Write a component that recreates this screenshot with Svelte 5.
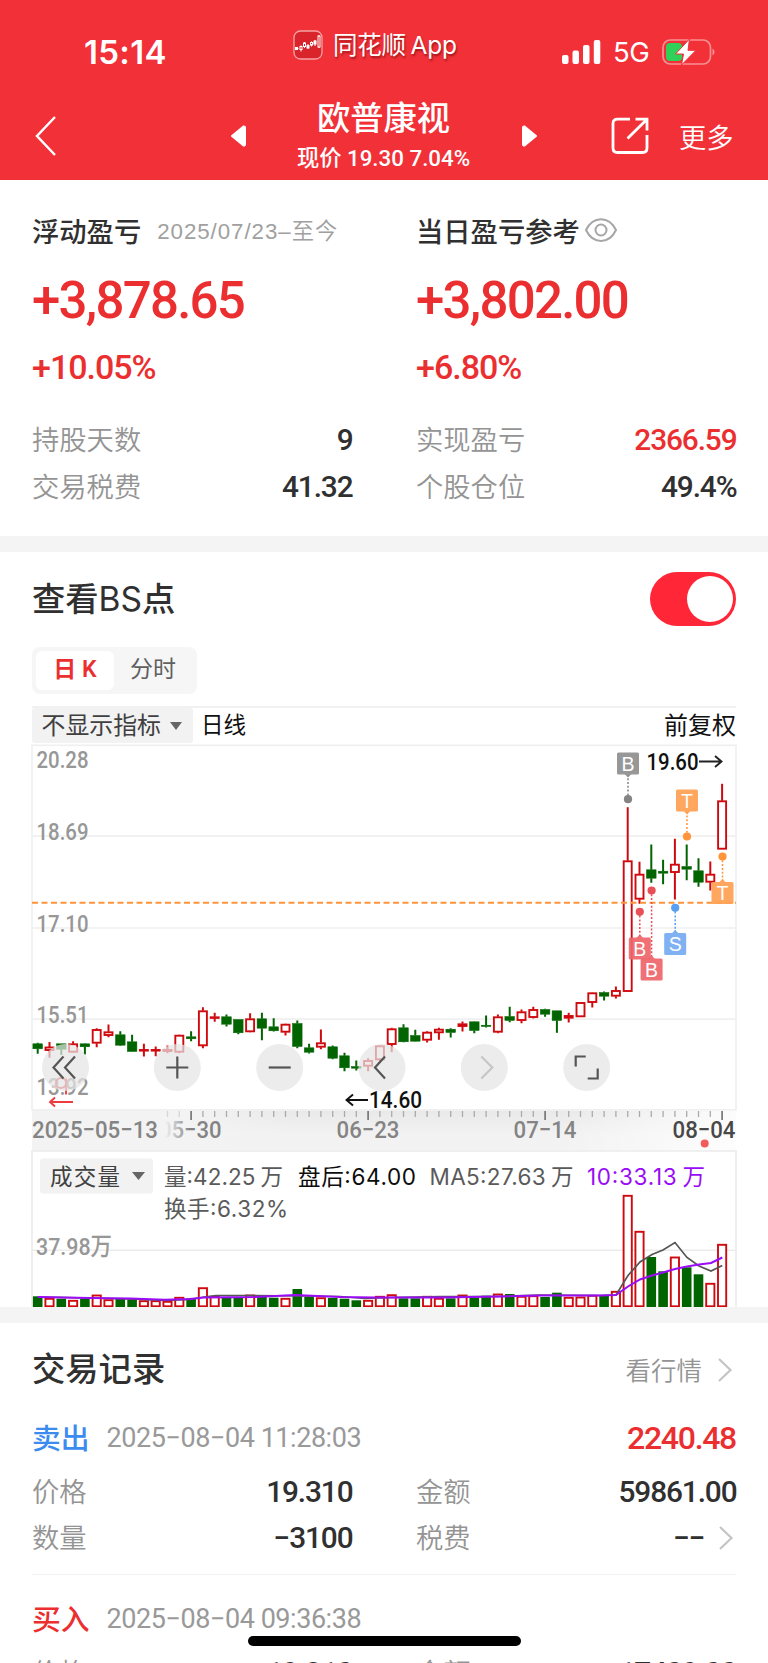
<script>
  // chart geometry: one candle every 11.8px
  const FIRST_X = 37.7
  const STEP = 11.8
  const BODY = 9.6
  const BASE = 1306.5

  // [up, high, body top, body bottom, low, volume bar height]
  const candles = [
    [0, 1042.3, 1043.3, 1048.3, 1053.3, 10.7],
    [1, 1041.5, 1046.5, 1050, 1057.3, 8.7],
    [0, 1043.3, 1043.3, 1048.7, 1054.3, 8.3],
    [1, 1040.7, 1043.3, 1051.7, 1052, 6.7],
    [0, 1043, 1043.3, 1046.3, 1054, 8],
    [1, 1027.7, 1029, 1042.7, 1046.7, 12],
    [1, 1024, 1031.3, 1035, 1036.7, 7.3],
    [0, 1030.7, 1034.3, 1044.7, 1045.3, 8],
    [0, 1034.3, 1041.3, 1051, 1051.3, 7.7],
    [1, 1043.3, 1049, 1050, 1056, 6.3],
    [1, 1046, 1049, 1050, 1055.7, 6.3],
    [1, 1045, 1049, 1051, 1052.7, 5.7],
    [1, 1034.3, 1034.7, 1051.7, 1052.7, 9.7],
    [0, 1030.7, 1036.3, 1038.3, 1040.7, 8.7],
    [1, 1006.7, 1010.3, 1045.3, 1047.7, 19.3],
    [1, 1012.3, 1016.3, 1017.7, 1021.3, 10.7],
    [0, 1014, 1016.3, 1023.7, 1026, 10],
    [0, 1019, 1019, 1032.3, 1033.7, 10],
    [1, 1012.7, 1018.3, 1031.3, 1031.7, 12],
    [0, 1012.3, 1018.3, 1027.7, 1039.7, 11.3],
    [0, 1017.7, 1026.3, 1030.3, 1031, 9.3],
    [1, 1023.3, 1023.7, 1031.7, 1035, 8.7],
    [0, 1020, 1023, 1046, 1047.7, 18],
    [0, 1043.3, 1047.3, 1051.7, 1053, 10],
    [1, 1029, 1042.3, 1046.7, 1048.7, 9.3],
    [0, 1045, 1046.3, 1057.7, 1058.7, 9],
    [0, 1052.3, 1055.3, 1067.3, 1070.7, 8.3],
    [0, 1060, 1066, 1067.7, 1070, 6.7],
    [1, 1057.7, 1060, 1065.7, 1070.7, 6.7],
    [1, 1045, 1045.3, 1059.3, 1062, 10.7],
    [1, 1027.3, 1028.3, 1044, 1051.7, 12.3],
    [0, 1023.7, 1027.3, 1041.3, 1041.7, 8.7],
    [0, 1029.3, 1035, 1040.7, 1041, 8.7],
    [1, 1030.7, 1031.7, 1039.7, 1042, 10.7],
    [1, 1027.3, 1028.7, 1032.3, 1039.3, 8.7],
    [0, 1027.7, 1028.7, 1032, 1037, 8.7],
    [1, 1021, 1023.3, 1026, 1031, 12],
    [0, 1021, 1021.3, 1030, 1032.7, 9.7],
    [0, 1015, 1024.7, 1026, 1027, 11.3],
    [1, 1014, 1016.3, 1031.7, 1032.7, 13],
    [0, 1006.3, 1016, 1020, 1021.7, 13],
    [1, 1009, 1011.3, 1020, 1022.7, 10.7],
    [1, 1006.3, 1009, 1017, 1018, 11.3],
    [0, 1008.3, 1009, 1013.7, 1016.3, 10],
    [0, 1010.3, 1010.3, 1020, 1032.3, 14.3],
    [1, 1012.3, 1015, 1017.7, 1022, 9.7],
    [1, 1001.7, 1002, 1016.3, 1016.5, 10],
    [1, 992, 992.3, 1002, 1007, 11.7],
    [0, 991, 992, 995.7, 1000, 11],
    [1, 986, 990, 995.7, 998, 15.7],
    [1, 806.7, 860.3, 991, 991, 111.7],
    [1, 861.3, 873.7, 898.7, 903.3, 75.7],
    [0, 844, 869.3, 877.7, 882.3, 50],
    [0, 859.3, 870.7, 872.7, 883.7, 35.7],
    [1, 838.3, 863.7, 872, 899, 50],
    [0, 844, 866, 868.7, 879.7, 39.7],
    [0, 857.7, 870.3, 881.7, 886.3, 32.7],
    [1, 861, 873.7, 881.7, 890, 23.7],
    [1, 783.3, 800.3, 848.7, 848.7, 62.7],
  ].map(([up, high, top, bottom, low, vol], i) => ({
    x: FIRST_X + i * STEP,
    up, high, top, bottom, low, vol,
  }))

  const priceLabels = [
    ['20.28', 767.5],
    ['18.69', 839.5],
    ['17.10', 931],
    ['15.51', 1022],
    ['13.92', 1094],
  ]

  // buy / sell / T marks. dir: 1 = box above its dot, -1 = box below
  const marks = [
    { t: 'B', x: 628, box: 752, dot: 798.7, dir: 1, fill: '#8f8f8f', ink: '#848484' },
    { t: 'B', x: 639.8, box: 937, dot: 911.3, dir: -1, fill: '#ee666b', ink: '#e94f57' },
    { t: 'B', x: 651.6, box: 958, dot: 890, dir: -1, fill: '#ee666b', ink: '#e94f57' },
    { t: 'S', x: 675.2, box: 932.5, dot: 907.3, dir: -1, fill: '#75abf2', ink: '#5a9ff0' },
    { t: 'T', x: 687, box: 789, dot: 836, dir: 1, fill: '#ffa052', ink: '#ff943a' },
    { t: 'T', x: 722.5, box: 881.5, dot: 856, dir: -1, fill: '#ffa052', ink: '#ff943a' },
  ]

  const ma5 = '37.7,1296.5 90,1297.5 130,1298.5 165,1300 190,1299 204,1296.5 216,1295 255,1295 300,1295.5 340,1296 365,1298 392,1297 440,1296 500,1296 540,1294.5 600,1295 616,1294.5 628,1275 640,1261.5 652,1254 663,1249.5 675,1242 687,1257 699,1265.5 711,1270.5 722.3,1265'
  const ma10 = '37.7,1296.5 90,1297.5 130,1298 165,1299.3 190,1298.5 204,1297 255,1296.5 295,1294.5 340,1296.5 375,1297 440,1297 500,1296 540,1295 600,1295 616,1294.5 628,1286 640,1279 652,1275 663,1272 675,1268.5 687,1266 699,1264 711,1262.5 722.3,1257'

  const ticks = candles.slice(11).map((c, i) => ({ x: c.x, major: [13, 28, 43, 58].includes(i + 11), faint: i < 2 }))

  const controls = [
    { x: 65.5, d: 'M-2 -11 L-12 0 L-2 11 M9.500 -11 L-0.500 0 L9.500 11' },
    { x: 177.3, d: 'M-11 0 H11 M0 -11 V11' },
    { x: 279.7, d: 'M-11 0 H11' },
    { x: 382, d: 'M3 -11 L-7 0 L3 11' },
    { x: 484.3, d: 'M-3 -11 L8 0 L-3 11', off: true },
    { x: 586.7, d: 'M-11 -1 V-11 H-1 M11 1 V11 H1' },
  ]

  const summary = [
    {
      title: '浮动盈亏', range: '2025/07/23–至今', amount: '+3,878.65', pct: '+10.05%',
      rows: [['持股天数', '9'], ['交易税费', '41.32']],
    },
    {
      title: '当日盈亏参考', eye: true, amount: '+3,802.00', pct: '+6.80%',
      rows: [['实现盈亏', '2366.59', true], ['个股仓位', '49.4%']],
    },
  ]

  const records = [
    {
      side: '卖出', sell: true, time: '2025−08−04 11:28:03', profit: '2240.48',
      cells: [['价格', '19.310'], ['金额', '59861.00'], ['数量', '−3100'], ['税费', '−−', true]],
    },
    {
      side: '买入', time: '2025−08−04 09:36:38', profit: '',
      cells: [['价格', '19.310'], ['金额', '17409.00']],
    },
  ]

  let showBS = true
</script>

<div class="screen">
  <header>
    <div class="status">
      <span class="clock">15:14</span>
      <div class="source">
        <svg width="30" height="30" viewBox="0 0 30 30">
          <rect x="1" y="1" width="28" height="28" rx="6.500" fill="#d9242b" stroke="#f5a3a5" stroke-width="1.300" />
          <path d="M3 18.500h2.500M8 15.500v6M11.500 12v6M15 14v5M18.500 11.500v5M22 10v6M26 5v13" stroke="#fff" stroke-width="1" />
          <g fill="#d9242b" stroke="#fff" stroke-width="1">
            <rect x="2.500" y="17.500" width="2" height="2" fill="#fff" /><rect x="7" y="16.500" width="2" height="3" />
            <rect x="10.500" y="13" width="2" height="3.500" /><rect x="14" y="15.500" width="2" height="2.500" fill="#fff" />
            <rect x="17.500" y="12.500" width="2" height="2.500" /><rect x="21" y="11" width="2" height="3" fill="#fff" />
            <rect x="25" y="6" width="2" height="11" />
          </g>
        </svg>
        <span>同花顺 App</span>
      </div>
      <div class="signal">
        <svg width="39" height="24" viewBox="0 0 39 24" fill="#fff">
          <rect y="15" width="6.500" height="9" rx="2" /><rect x="10.500" y="10.500" width="6.500" height="13.500" rx="2" />
          <rect x="21" y="5" width="6.500" height="19" rx="2" /><rect x="31.800" width="6.500" height="24" rx="2" />
        </svg>
        <span>5G</span>
        <svg width="54" height="28" viewBox="0 0 54 28">
          <rect x="1" y="2" width="47.500" height="24" rx="7.500" fill="none" stroke="#f78f93" stroke-width="1.700" />
          <path d="M50.500 10.500a4 4 0 0 1 0 7z" fill="#f78f93" />
          <rect x="4" y="5" width="16" height="18" rx="4" fill="#30d158" />
          <path d="M27.500 1 L13.500 16 H21.500 L19.500 27 L34 12.300 H26 Z" fill="#fff" stroke="#f23038" stroke-width="1" />
        </svg>
      </div>
    </div>
    <nav>
      <svg class="back" width="24" height="42" viewBox="0 0 24 42"><path d="M22 2 L4 21 L22 40" fill="none" stroke="#fff" stroke-width="2.500" /></svg>
      <svg class="prev" width="17" height="24" viewBox="0 0 17 24"><path d="M2 12 L13.500 2.500 Q15 2 15 4 V20 Q15 22 13.500 21.500 Z" fill="#fff" stroke="#fff" stroke-width="2" stroke-linejoin="round" /></svg>
      <div class="stock">
        <strong>欧普康视</strong>
        <span>现价 19.30 7.04%</span>
      </div>
      <svg class="next" width="17" height="24" viewBox="0 0 17 24"><path d="M15 12 L3.500 2.500 Q2 2 2 4 V20 Q2 22 3.500 21.500 Z" fill="#fff" stroke="#fff" stroke-width="2" stroke-linejoin="round" /></svg>
      <svg class="share" width="38" height="38" viewBox="0 0 38 38" fill="none" stroke="#fff" stroke-width="2.800">
        <path d="M19 2.200 H6.500 Q2 2.200 2 6.500 V31 Q2 35.500 6.500 35.500 H31.500 Q36 35.500 36 31 V18" />
        <path d="M24.500 2.200 H36 V13.500 M36 2.200 L16.500 21.500" />
      </svg>
      <span class="more">更多</span>
    </nav>
  </header>

  <section class="summary">
    {#each summary as s}
      <div class="col">
        <div class="col-title">
          <b>{s.title}</b>
          {#if s.range}<span>{s.range}</span>{/if}
          {#if s.eye}
            <svg width="34" height="26" viewBox="0 0 34 26" fill="none" stroke="#a6a6a6" stroke-width="2">
              <path d="M2 13 C9 -1.500 25 -1.500 32 13 C25 27.500 9 27.500 2 13 Z" /><circle cx="17" cy="13" r="5.500" />
            </svg>
          {/if}
        </div>
        <div class="amount">{s.amount}</div>
        <div class="pct">{s.pct}</div>
        {#each s.rows as [label, value, red]}
          <div class="row"><span>{label}</span><b class:red>{value}</b></div>
        {/each}
      </div>
    {/each}
  </section>

  <section class="chart">
    <div class="bs-row">
      <h2>查看<em>BS</em>点</h2>
      <button class="toggle" class:on={showBS} aria-label="查看BS点" on:click={() => (showBS = !showBS)}><i></i></button>
    </div>
    <div class="tabs"><span class="active">日 K</span><span>分时</span></div>
    <div class="toolbar">
      <span class="select"><span>不显示指标</span><i></i></span>
      <span class="period">日线</span>
      <span class="adjust">前复权</span>
    </div>

    <svg class="plot" width="706" height="563.500" viewBox="31 743.500 706 563.500">
      <defs>
        <linearGradient id="axis" x1="0" y1="0" x2="0" y2="1">
          <stop offset="0" stop-color="#e9e9e9" /><stop offset="0.600" stop-color="#f2f2f2" /><stop offset="1" stop-color="#f3f3f3" />
        </linearGradient>
        <linearGradient id="axis-left" x1="0" x2="1">
          <stop offset="0.600" stop-color="#f3f3f3" /><stop offset="1" stop-color="#f3f3f3" stop-opacity="0" />
        </linearGradient>
        <linearGradient id="axis-right" x1="0" x2="1">
          <stop offset="0" stop-color="#fff" stop-opacity="0" /><stop offset="1" stop-color="#fff" stop-opacity="0.850" />
        </linearGradient>
        <linearGradient id="date-fade" x1="0" x2="1">
          <stop offset="0.840" stop-color="#f3f3f3" /><stop offset="1" stop-color="#f3f3f3" stop-opacity="0" />
        </linearGradient>
      </defs>

      <!-- k-line -->
      <g stroke="#f0f0f0" stroke-width="1.700" fill="none">
        <rect x="32" y="744.800" width="704" height="364.500" />
        <path d="M32 835.700H736M32 927.500H736M32 1018.700H736" />
      </g>
      <g class="num grey">
        {#each priceLabels as [text, y]}
          <text x="36.500" {y} textLength="52" lengthAdjust="spacingAndGlyphs">{text}</text>
        {/each}
      </g>
      {#each candles as c}
        {@const color = c.up ? '#cf0a0f' : '#006400'}
        <path d="M{c.x} {c.high}V{c.top}M{c.x} {c.bottom}V{c.low}" stroke={color} stroke-width="2" />
        <rect
          x={c.x - BODY / 2 + (c.up ? 0.8 : 0)} y={c.top + (c.up ? 0.5 : 0)}
          width={BODY - (c.up ? 1.6 : 0)} height={Math.max(c.bottom - c.top - (c.up ? 1 : 0), 0.6)}
          fill={c.up ? '#fff' : color} stroke={color} stroke-width={c.up ? 1.9 : 0.5} />
      {/each}
      <path d="M32 902.300H736" stroke="#ff943a" stroke-width="2" stroke-dasharray="6 3.500" />

      {#if showBS}
        {#each marks as m}
          <path
            d="M{m.x} {m.dot}V{m.dir > 0 ? m.box + 22 : m.box}"
            stroke={m.ink} stroke-width="1.500" stroke-dasharray="2 1.800" />
          <circle cx={m.x} cy={m.dot} r="4.100" fill={m.ink} />
          <g opacity="0.920">
            <path
              d={m.dir > 0 ? `M${m.x - 4} ${m.box + 21}h8l-4 4z` : `M${m.x - 4} ${m.box + 1}h8l-4 -4z`}
              fill={m.fill} />
            <rect x={m.x - 11} y={m.box} width="22" height="22" rx="1.500" fill={m.fill} />
            <text class="mark" x={m.x} y={m.box + 18} text-anchor="middle">{m.t}</text>
          </g>
        {/each}
      {/if}
      <text class="num" x="646.500" y="769.500" textLength="52" lengthAdjust="spacingAndGlyphs">19.60</text>
      <path d="M699 761H721M715 755.500L721.500 761L715 766.500" fill="none" stroke="#222" stroke-width="1.900" />
      <text class="num" x="369" y="1107.500" textLength="53" lengthAdjust="spacingAndGlyphs">14.60</text>
      <path d="M368 1099.500H347M353 1094L346.500 1099.500L353 1105" fill="none" stroke="#111" stroke-width="1.900" />
      <g fill="none" stroke="#ef3b3f" stroke-width="1.900">
        <circle cx="61" cy="1082.500" r="5" /><path d="M66 1078V1094" />
        <path d="M73 1101.500H50M55 1097L50 1101.500L55 1106" />
      </g>

      <!-- chart controls -->
      {#each controls as c}
        <g transform="translate({c.x} 1067)">
          <circle r="23.500" fill="rgb(228,228,228)" fill-opacity="0.720" />
          <path d={c.d} fill="none" stroke={c.off ? '#c6c6c6' : '#555'} stroke-width="2.200" />
        </g>
      {/each}

      <!-- date axis -->
      <rect x="32" y="1110" width="704" height="40" fill="url(#axis)" />
      <rect x="32" y="1110" width="260" height="40" fill="url(#axis-left)" />
      <rect x="560" y="1110" width="176" height="40" fill="url(#axis-right)" />
      {#each ticks as t}
        <path d="M{t.x} 1110.500v{t.major ? 9 : 6}" stroke={t.major ? '#777' : '#aaa'} stroke-width={t.major ? 1.7 : 1.3} opacity={t.faint ? 0.4 : 1} />
      {/each}
      <g class="num date">
        <text x="159" y="1137" textLength="62.500" lengthAdjust="spacingAndGlyphs">05−30</text>
        <rect x="32" y="1120" width="158" height="22" fill="url(#date-fade)" />
        <text x="32" y="1137" textLength="126" lengthAdjust="spacingAndGlyphs">2025−05−13</text>
        <text x="336.500" y="1137" textLength="63" lengthAdjust="spacingAndGlyphs">06−23</text>
        <text x="513.500" y="1137" textLength="63" lengthAdjust="spacingAndGlyphs">07−14</text>
        <text class="last" x="672.500" y="1137" textLength="63" lengthAdjust="spacingAndGlyphs">08−04</text>
      </g>
      <circle cx="704.700" cy="1143" r="4" fill="#f25a5d" />

      <!-- volume -->
      <path d="M32 1307V1150.500H736V1307M32 1249.800H736" fill="none" stroke="#ececec" stroke-width="1.600" />
      <rect x="40" y="1158" width="113" height="35" rx="3" fill="#f2f2f2" />
      <text class="cn dark" x="50" y="1184.500" textLength="70">成交量</text>
      <path d="M132 1171.500h13l-6.500 8z" fill="#666" />
      <text class="cn" x="164" y="1184.500" textLength="119">量:42.25<tspan dx="5">万</tspan></text>
      <text class="cn black" x="298" y="1184.500" textLength="118">盘后:64.00</text>
      <text class="cn" x="429.500" y="1184.500" textLength="144">MA5:27.63<tspan dx="5">万</tspan></text>
      <text class="cn purple" x="587" y="1184.500" textLength="118">10:33.13<tspan dx="5">万</tspan></text>
      <text class="cn" x="164" y="1216" textLength="124">换手:6.32%</text>
      <text class="num grey" x="36" y="1254" textLength="76" lengthAdjust="spacingAndGlyphs">37.98万</text>
      {#each candles as c}
        <rect
          x={c.x - BODY / 2 + (c.up ? 0.7 : 0)} y={BASE - c.vol + (c.up ? 0.5 : 0)}
          width={BODY - (c.up ? 1.4 : 0)} height={c.vol - (c.up ? 1.2 : 0)}
          fill={c.up ? '#fff' : '#006400'} stroke={c.up ? '#cf0a0f' : 'none'} stroke-width="1.900" />
      {/each}
      <polyline points={ma5} fill="none" stroke="#555" stroke-width="1.700" />
      <polyline points={ma10} fill="none" stroke="#9a0cf5" stroke-width="2" />
    </svg>
  </section>

  <section class="trades">
    <div class="trades-head">
      <h2>交易记录</h2>
      <span>看行情</span>
      <svg width="16" height="26" viewBox="0 0 16 26"><path d="M2 2 L13.500 13 L2 24" fill="none" stroke="#c4c4c4" stroke-width="2.200" /></svg>
    </div>
    {#each records as r}
      <article>
        <div class="record-head">
          <b class:sell={r.sell}>{r.side}</b>
          <time>{r.time}</time>
          <strong>{r.profit}</strong>
        </div>
        <div class="cells">
          {#each r.cells as [label, value, more]}
            <div class="row">
              <span>{label}</span><b>{value}</b>
              {#if more}
                <svg width="16" height="26" viewBox="0 0 16 26"><path d="M2 2 L13.500 13 L2 24" fill="none" stroke="#c4c4c4" stroke-width="2.200" /></svg>
              {/if}
            </div>
          {/each}
        </div>
      </article>
    {/each}
  </section>

  <div class="home-bar"></div>
</div>

<style>
  :global(body) {
    margin: 0;
    background: #fff;
  }

  .screen {
    position: relative;
    width: 768px;
    height: 1663px;
    overflow: hidden;
    background: #fff;
    color: #303030;
    font-family: Roboto, 'Noto Sans CJK SC', sans-serif;
  }

  h2 {
    margin: 0;
    font-size: 33.3px;
    font-weight: 500;
    line-height: 1;
  }

  h2 em {
    font-family: Inter, sans-serif;
    font-size: 33.5px;
    font-style: normal;
    font-weight: 400;
  }

  svg {
    flex-shrink: 0;
  }

  /* header */
  header {
    height: 179.5px;
    background: #f23038;
    color: #fff;
  }

  .status {
    display: grid;
    grid-template-columns: 293px 1fr 206px;
    height: 92px;
    box-sizing: border-box;
    padding-top: 24px;
    font-family: Inter, 'Noto Sans CJK SC', sans-serif;
  }

  .clock {
    padding-left: 84px;
    font-size: 33px;
    font-weight: 600;
    line-height: 56px;
    letter-spacing: 0.3px;
  }

  .source {
    display: flex;
    align-items: center;
    gap: 10px;
    height: 41px;
    font-size: 24.5px;
    letter-spacing: -0.2px;
    word-spacing: -2px;
    white-space: nowrap;
    text-shadow: 1px 2px 2px rgba(80, 0, 0, 0.5);
  }

  .source span {
    padding-bottom: 3px;
  }

  .signal {
    display: flex;
    align-items: center;
    height: 56px;
    font-size: 27.5px;
  }

  .signal span {
    margin: 0 13px 0 12px;
    letter-spacing: -0.5px;
  }

  nav {
    display: flex;
    align-items: center;
    height: 87px;
    padding-left: 33px;
  }

  .back { margin-top: 1px; }
  .prev { margin-left: 173px; margin-top: 1px; }
  .next { margin-left: 50px; margin-top: 1px; }
  .share { margin-left: 73px; margin-top: 1px; }

  .stock {
    display: flex;
    flex-direction: column;
    align-items: center;
    width: 175px;
    margin-left: 49px;
    padding-top: 1px;
    white-space: nowrap;
  }

  .stock strong {
    font-size: 33.3px;
    font-weight: 500;
    line-height: 44px;
  }

  .stock span {
    font-size: 22.3px;
    font-weight: 500;
    line-height: 35px;
  }

  .more {
    margin-left: 30px;
    font-size: 27.3px;
    font-weight: 350;
  }

  /* profit summary */
  .summary {
    display: grid;
    grid-template-columns: 320px 320px;
    gap: 64px;
    height: 356.5px;
    box-sizing: border-box;
    padding: 25px 32px 0;
  }

  .col-title {
    display: flex;
    align-items: center;
    height: 50px;
    margin-bottom: 2px;
    white-space: nowrap;
  }

  .col-title b {
    font-size: 27.3px;
    font-weight: 500;
  }

  .col-title span {
    margin-left: 16px;
    margin-top: -1px;
    font-family: 'Liberation Sans', 'Noto Sans CJK SC', sans-serif;
    font-size: 22.3px;
    font-weight: 350;
    letter-spacing: 0.95px;
    color: #a0a0a0;
  }

  .col-title svg {
    margin-left: 4px;
  }

  .amount,
  .pct {
    color: #eb2f30;
    font-weight: 500;
    white-space: nowrap;
  }

  .amount {
    height: 84px;
    font-size: 51px;
    line-height: 87px;
    letter-spacing: -1.75px;
  }

  .pct {
    height: 76px;
    font-size: 34px;
    line-height: 52px;
    letter-spacing: -1px;
  }

  .row {
    display: flex;
    align-items: center;
    height: 46.5px;
  }

  .row span {
    flex: 1;
    margin-top: -3px;
    font-size: 27.3px;
    font-weight: 350;
    color: #949494;
  }

  .row b {
    margin-right: -0.5px;
    font-size: 29.8px;
    font-weight: 500;
    letter-spacing: -1.1px;
  }

  .row b.red {
    color: #eb2f30;
  }

  .row svg {
    margin: 0 2px 0 14px;
  }

  /* chart section */
  .chart {
    padding: 0 32px;
    border-top: 16px solid #f4f4f4;
    border-bottom: 16px solid #f4f4f4;
  }

  .bs-row {
    display: flex;
    align-items: center;
    justify-content: space-between;
    height: 94.500px;
  }

  .toggle {
    width: 86px;
    height: 54px;
    padding: 4px;
    border: 0;
    border-radius: 27px;
    background: #ccc;
  }

  .toggle i {
    display: block;
    width: 46px;
    height: 46px;
    border-radius: 50%;
    background: #fff;
  }

  .toggle.on {
    background: #ff2638;
  }

  .toggle.on i {
    margin-left: 33px;
  }

  .tabs {
    display: flex;
    width: 165px;
    height: 47px;
    box-sizing: border-box;
    padding: 4px;
    border-radius: 8px;
    background: #f6f6f6;
    font-size: 23px;
    line-height: 38px;
    color: #606060;
  }

  .tabs span {
    width: 78px;
    height: 39px;
    text-align: center;
  }

  .tabs .active {
    border-radius: 6px;
    background: #fff;
    color: #eb2f30;
    font-weight: 600;
  }

  .toolbar {
    display: flex;
    align-items: center;
    height: 38px;
    margin-top: 12px;
    box-sizing: border-box;
    border-top: 2px solid #f1f1f1;
    font-size: 22.500px;
    color: #111;
  }

  .select {
    display: flex;
    align-items: center;
    width: 161px;
    height: 35px;
    box-sizing: border-box;
    padding-left: 9.500px;
    border-radius: 3px;
    background: #f2f2f2;
    font-size: 23.900px;
    color: #404040;
  }

  .select span {
    margin-top: -4px;
  }

  .select i {
    margin-left: 9px;
    border: 6px solid transparent;
    border-top: 8px solid #666;
    border-bottom: 0;
  }

  .period {
    margin: -5px 0 0 8px;
  }

  .adjust {
    margin: -5px 0 0 auto;
    font-size: 24px;
  }

  .plot {
    display: block;
    margin: 0 -1px;
  }

  .num {
    font-size: 24.500px;
    font-weight: 500;
    fill: #111;
  }

  .grey,
  .grey text {
    fill: #979797;
  }

  .date text {
    fill: #848484;
  }

  .date .last {
    fill: #484848;
  }

  .mark {
    font-family: 'Liberation Sans', sans-serif;
    font-size: 19.500px;
    fill: #fff;
  }

  .cn {
    font-family: Inter, 'Noto Sans CJK SC', sans-serif;
    font-size: 22.500px;
    fill: #5a5a5a;
  }

  .cn.dark { fill: #404040; }
  .cn.black { fill: #0c0c0c; }
  .cn.purple { fill: #9a0cf5; }

  /* trades */
  .trades {
    padding: 0 32px;
  }

  .trades-head {
    display: flex;
    align-items: center;
    height: 94px;
    margin-bottom: -9px;
  }

  .trades-head h2 {
    flex: 1;
  }

  .trades-head span {
    margin: -3px 15px 0 0;
    font-size: 25.500px;
    font-weight: 350;
    color: #949494;
  }

  .trades-head svg {
    margin-right: 3px;
  }

  article {
    height: 165.500px;
    margin-bottom: 14.500px;
    border-bottom: 1.500px solid #f1f1f1;
  }

  .record-head {
    display: flex;
    align-items: center;
    height: 60px;
    white-space: nowrap;
  }

  .record-head b {
    margin-top: -3px;
    font-size: 28.800px;
    font-weight: 500;
    color: #eb2f30;
  }

  .record-head b.sell {
    color: #3c8cf0;
  }

  .record-head time {
    flex: 1;
    margin-left: 17px;
    font-size: 27px;
    letter-spacing: -0.450px;
    color: #999;
  }

  .record-head strong {
    font-size: 32px;
    font-weight: 500;
    letter-spacing: -1.300px;
    color: #eb2f30;
  }

  .cells {
    display: grid;
    grid-template-columns: 320px 320px;
    column-gap: 64px;
  }

  .home-bar {
    position: absolute;
    left: 248px;
    bottom: 17px;
    width: 273px;
    height: 10px;
    border-radius: 5px;
    background: #000;
  }
</style>
